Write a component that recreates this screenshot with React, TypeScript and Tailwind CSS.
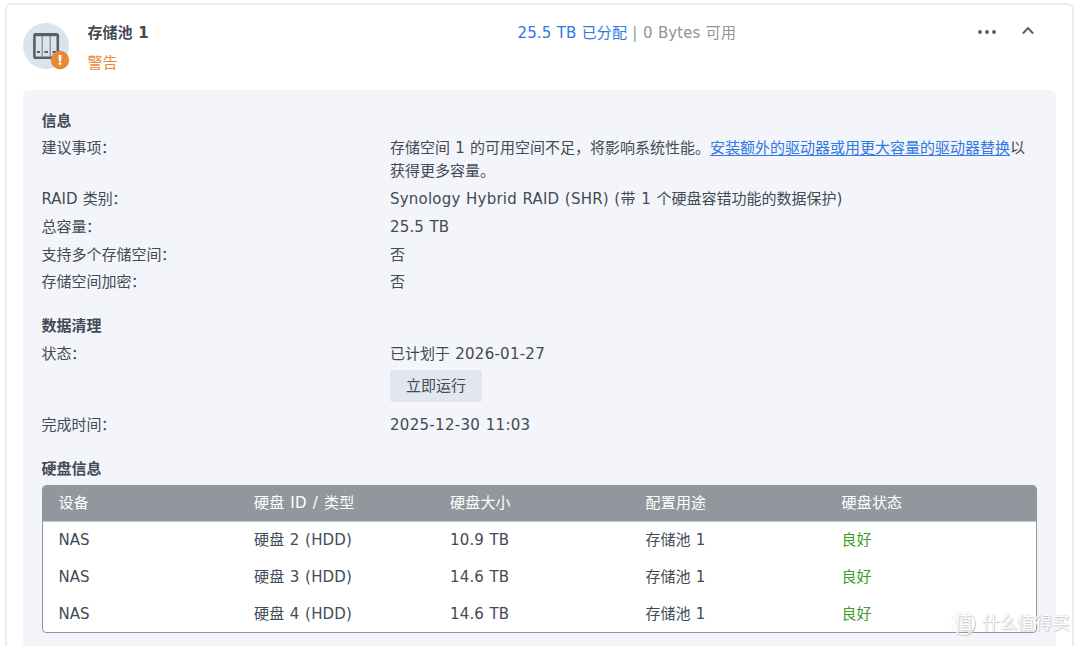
import type { ReactNode } from 'react';

const disks = [
  { device: 'NAS', disk: '硬盘 2 (HDD)', size: '10.9 TB' },
  { device: 'NAS', disk: '硬盘 3 (HDD)', size: '14.6 TB' },
  { device: 'NAS', disk: '硬盘 4 (HDD)', size: '14.6 TB' },
];

const columns = ['设备', '硬盘 ID / 类型', '硬盘大小', '配置用途', '硬盘状态'];

function PoolIcon() {
  return (
    <svg className="h-12 w-12 shrink-0" viewBox="0 0 48 48" fill="none">
      <circle cx="23" cy="23" r="23" fill="#dbe3eb" />
      <rect x="11.4" y="11.4" width="23.4" height="23.4" rx="1.4" fill="#dbe3eb" stroke="#54606a" strokeWidth="2.6" />
      <path d="M11 11H35V13.2H11Z" fill="#54606a" />
      <path d="M19.2 13V34M27.2 13V34" stroke="#77828b" strokeWidth="1.1" />
      <path d="M14 29H17M21.5 29H25M29.5 29H33" stroke="#54606a" strokeWidth="2" />
      <circle cx="37" cy="37" r="9.2" fill="#e88a35" />
      <path d="M35.5 32H38.5L38.1 38.4H35.9Z" fill="#fff" />
      <rect x="35.7" y="39.4" width="2.6" height="2.3" rx=".4" fill="#fff" />
    </svg>
  );
}

function Row({ label, children }: { label: string; children: ReactNode }) {
  return (
    <div className="flex min-h-[27.75px] py-[2.375px]">
      <dt className="w-[348.5px] shrink-0">
        {label}
        <span className="-ml-[0.5px]">：</span>
      </dt>
      <dd className="min-w-0 flex-1">{children}</dd>
    </div>
  );
}

function Heading({ children }: { children: ReactNode }) {
  return <h2 className="h-7 leading-7 font-bold">{children}</h2>;
}

export default function App() {
  return (
    <main className="relative h-[646px] w-[1080px] overflow-hidden bg-white pt-[3px] pl-[5px] font-['DejaVu_Sans','Noto_Sans_CJK_SC',sans-serif] text-[15px] leading-[23px] text-[#414b55] [word-spacing:0.5px]">
      <section className="h-[700px] w-[1069px] rounded-md border-2 border-[#e9edf3] px-[16px]">
        <header className="flex h-[85px] pt-[18px]">
          <PoolIcon />
          <div className="ml-[16.5px] w-[430px] -translate-y-[1px]">
            <h1 className="h-[30px] leading-[23px] font-bold">存储池 1</h1>
            <p className="leading-[23px] text-[#e88a35]">警告</p>
          </div>
          <p className="flex-1 -translate-y-[1px] tracking-[0.1px] whitespace-nowrap text-[#8e949b]">
            <span className="text-[#2f78e6]">25.5 TB 已分配</span> | 0 Bytes 可用
          </p>
          <div className="mr-[22.5px] flex gap-[24.5px]">
            <svg className="h-5 w-5" viewBox="0 0 20 20" fill="#505b65">
              <circle cx="3" cy="9" r="1.9" />
              <circle cx="10" cy="9" r="1.9" />
              <circle cx="17" cy="9" r="1.9" />
            </svg>
            <svg className="h-4 w-3" viewBox="0 0 12 16" fill="none" stroke="#505b65" strokeWidth="1.9">
              <path d="M.9 10.5L6 5.2L11.1 10.5" />
            </svg>
          </div>
        </header>

        <div className="h-[600px] w-[1033px] rounded-md bg-[#f4f5fa] px-[18.5px] pt-[17px]">
          <Heading>信息</Heading>
          <dl>
            <Row label="建议事项">
              存储空间 1 的可用空间不足，将影响系统性能。
              <a className="text-[#2f78e6] underline underline-offset-2">安装额外的驱动器或用更大容量的驱动器替换</a>以
              <br />
              获得更多容量。
            </Row>
            <Row label="RAID 类别">
              <span className="tracking-[0.22px]">Synology Hybrid RAID (SHR) (带 1 </span>
              <span>个硬盘容错功能的数据保护)</span>
            </Row>
            <Row label="总容量">
              <span className="tracking-[0.15px]">25.5 TB</span>
            </Row>
            <Row label="支持多个存储空间">否</Row>
            <Row label="存储空间加密">否</Row>
          </dl>

          <div className="mt-[15.5px]">
            <Heading>数据清理</Heading>
            <dl>
              <Row label="状态">
                已计划于 <span className="tracking-[0.25px]">2026-01-27</span>
                <button className="mt-[4px] mb-[8px] block h-8 w-[92px] rounded-[3px] bg-[#e1e6ef] pt-px">立即运行</button>
              </Row>
              <Row label="完成时间">
                <span className="tracking-[0.3px]">2025-12-30 11:03</span>
              </Row>
            </dl>
          </div>

          <div className="mt-[15.5px]">
            <Heading>硬盘信息</Heading>
            <div className="mt-[1.5px] w-[995.5px] overflow-hidden rounded-[4px] border border-[#92979e] bg-white">
              <div className="grid h-[36px] grid-cols-[195.5px_196px_195.5px_196px_1fr] items-center border-b border-[#c6cad0] bg-[#92979e] pt-px pl-[16px] text-white">
                {columns.map((column) => (
                  <span key={column} className="tracking-[0.2px] [word-spacing:1px]">
                    {column}
                  </span>
                ))}
              </div>
              {disks.map((disk) => (
                <div
                  key={disk.disk}
                  className="grid h-[37px] grid-cols-[195.5px_196px_195.5px_196px_1fr] items-center pt-px pl-[16px] last:h-[36px] last:pt-[2px]"
                >
                  <span>{disk.device}</span>
                  <span className="tracking-[0.2px]">{disk.disk}</span>
                  <span className="tracking-[0.15px]">{disk.size}</span>
                  <span>存储池 1</span>
                  <span className="text-[#3e9d27]">良好</span>
                </div>
              ))}
            </div>
          </div>
        </div>
      </section>

      <div className="absolute top-[611px] left-[952px] flex items-center gap-[7px] text-[17.5px] leading-6 whitespace-nowrap text-white [text-shadow:0_0_1px_#bbb,1px_1px_1px_#ccc]">
        <span className="flex h-[23px] w-[23px] items-center justify-center rounded-full border border-white text-[18px] shadow-[0_0_1px_#bbb,1px_1px_1px_#ccc]">
          值
        </span>
        <span>什么值得买</span>
      </div>
    </main>
  );
}
